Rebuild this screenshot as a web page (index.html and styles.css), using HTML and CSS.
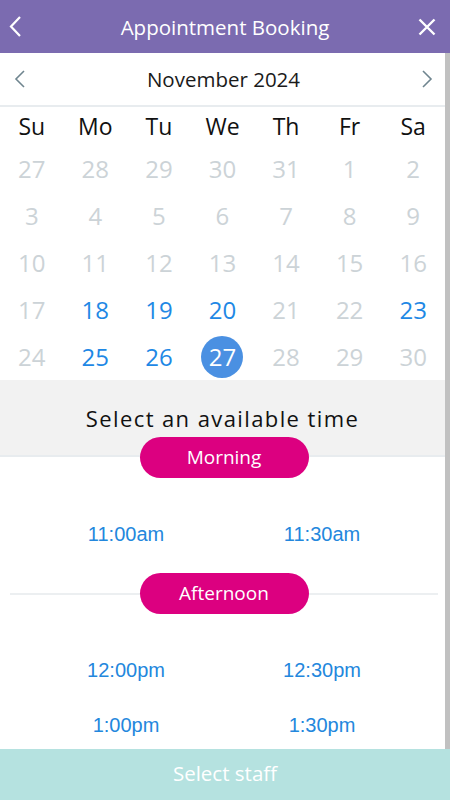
FILE: index.html
```html
<!DOCTYPE html>
<html lang="en">
<head>
    <meta charset="UTF-8">
    <meta name="viewport" content="width=device-width, initial-scale=1.0">
    <title>Appointment Booking</title>
    <link rel="stylesheet" href="styles.css">
</head>
<body>
    <div class="app">
        <header class="topbar">
            <a href="#" class="icon-btn back">
                <svg width="20" height="24" viewBox="0 0 20 24"><polyline points="15,2 6,11.5 15,21" fill="none" stroke="#fff" stroke-width="2.2"/></svg>
            </a>
            <h1>Appointment Booking</h1>
            <a href="#" class="icon-btn close">
                <svg width="20" height="20" viewBox="0 0 20 20"><path d="M2.5 2.5 L17.5 17.5 M17.5 2.5 L2.5 17.5" stroke="#fff" stroke-width="2.4"/></svg>
            </a>
        </header>

        <div class="main">
            <div class="content">
                <div class="month">
                    <a href="#" class="arrow">
                        <svg width="12" height="20" viewBox="0 0 12 20"><polyline points="10,2 2,10 10,18" fill="none" stroke="#6f858f" stroke-width="1.6"/></svg>
                    </a>
                    <span>November 2024</span>
                    <a href="#" class="arrow">
                        <svg width="12" height="20" viewBox="0 0 12 20"><polyline points="2,2 10,10 2,18" fill="none" stroke="#6f858f" stroke-width="1.6"/></svg>
                    </a>
                </div>

                <div class="week">
                    <span>Su</span><span>Mo</span><span>Tu</span><span>We</span><span>Th</span><span>Fr</span><span>Sa</span>
                </div>
                <div class="days" id="days"></div>

                <div class="time-head">Select an available time</div>

                <div class="divider first"><span class="pill">Morning</span></div>
                <div class="slots first">
                    <a href="#">11:00am</a>
                    <a href="#">11:30am</a>
                </div>

                <div class="divider"><span class="pill">Afternoon</span></div>
                <div class="slots">
                    <a href="#">12:00pm</a>
                    <a href="#">12:30pm</a>
                    <a href="#">1:00pm</a>
                    <a href="#">1:30pm</a>
                </div>
            </div>
            <div class="scrollbar"></div>
        </div>

        <footer class="bottombar">Select staff</footer>
    </div>

    <script>
        // dias disponiveis em azul, o resto em cinza
        const available = [18, 19, 20, 23, 25, 26, 27];
        const selected = 27;
        const cells = [27, 28, 29, 30, 31];
        for (let d = 1; d <= 30; d++) cells.push(d);

        let html = '';
        cells.forEach((d, i) => {
            let cls = 'day';
            if (i >= 5 && available.includes(d)) cls += ' open';
            if (i >= 5 && d === selected) cls += ' selected';
            html += `<span class="${cls}"><b>${d}</b></span>`;
        });
        document.getElementById('days').innerHTML = html;
    </script>
</body>
</html>
```

FILE: styles.css
```css
body {
    margin: 0;
    font-family: "Open Sans", Arial, sans-serif;
    background-color: #fff;
}
a {
    text-decoration: none;
}

.app {
    width: 450px;
    height: 800px;
    display: flex;
    flex-direction: column;
    overflow: hidden;
}

/* cabecalho roxo */
.topbar {
    height: 53px;
    flex: none;
    background-color: #7b6bb0;
    display: flex;
    align-items: center;
    justify-content: space-between;
    padding: 0 9px;
}
.topbar h1 {
    margin: 0;
    font-size: 20.5px;
    font-weight: 400;
    color: #fff;
}
.icon-btn {
    width: 30px;
    display: flex;
}
.icon-btn.back svg {
    margin-left: -4px;
}
.icon-btn.close {
    justify-content: flex-end;
}
.icon-btn.close svg {
    margin-right: 4.5px;
}

.main {
    flex: 1;
    display: flex;
    min-height: 0;
}
.content {
    width: 445px;
    overflow: hidden;
}
.scrollbar {
    width: 5px;
    background-color: #c1c1c1;
}

/* calendario */
.month {
    height: 52px;
    display: flex;
    align-items: center;
    justify-content: space-between;
    padding: 0 12px 0 14px;
    border-bottom: 2px solid #e8ecef;
    font-size: 20.5px;
    color: #1a1a1a;
}
.arrow {
    display: flex;
}
.week,
.days {
    display: grid;
    grid-template-columns: repeat(7, 1fr);
    text-align: center;
}
.week {
    height: 38px;
    align-items: center;
    font-size: 23px;
    color: #111;
}
.day {
    height: 47px;
    display: flex;
    align-items: center;
    justify-content: center;
    font-size: 24px;
    color: #ccd3d7;
}
.day b {
    font-weight: 400;
    width: 42px;
    height: 42px;
    line-height: 42px;
    border-radius: 50%;
}
.day.open {
    color: #1e88e5;
}
.day.selected b {
    background-color: #4a90e2;
    color: #fff;
}

/* horarios */
.time-head {
    height: 52px;
    padding-top: 23px;
    line-height: 30px;
    background-color: #f2f2f2;
    border-bottom: 2px solid #e8ecef;
    text-align: center;
    font-size: 22px;
    letter-spacing: 1.4px;
    color: #111;
}
.divider {
    display: flex;
    align-items: center;
    padding: 0 7px 0 10px;
}
.divider::before,
.divider::after {
    content: '';
    flex: 1;
    height: 2px;
    background-color: #eceff1;
}
.divider.first {
    margin-top: -20px;
}
.divider.first::before,
.divider.first::after {
    background-color: transparent;
}
.pill {
    width: 169px;
    height: 41px;
    line-height: 41px;
    border-radius: 21px;
    background-color: #dc0080;
    color: #fff;
    text-align: center;
    font-size: 19px;
}
.slots {
    display: grid;
    grid-template-columns: 1fr 1fr;
    padding: 29px 25px 0 28px;
    font-family: "Liberation Sans", Arial, sans-serif;
    font-size: 20px;
}
.slots.first {
    padding-bottom: 11px;
}
.slots a {
    height: 55px;
    line-height: 55px;
    text-align: center;
    color: #2387dd;
}

.bottombar {
    height: 48px;
    padding-bottom: 3px;
    flex: none;
    background-color: #b5e2e0;
    color: #fff;
    font-size: 20.5px;
    display: flex;
    align-items: center;
    justify-content: center;
}
```
